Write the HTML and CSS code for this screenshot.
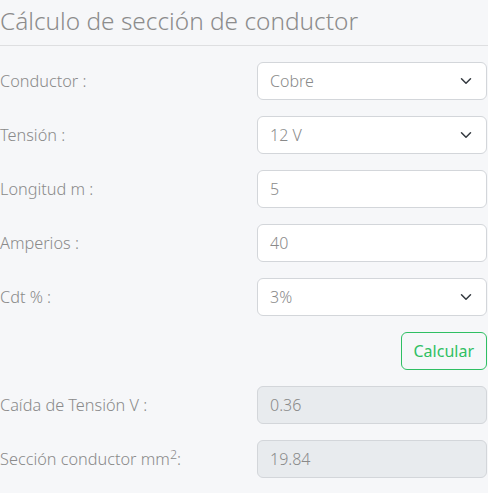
FILE: index.html
```html
<!DOCTYPE html>
<html lang="es">
<head>
<meta charset="utf-8">
<title>Cálculo de sección de conductor</title>
<link rel="stylesheet" href="styles.css">
</head>
<body>
<h1 class="title">Cálculo de sección de conductor</h1>
<form class="form">
  <label class="label">Conductor :</label>
  <div class="field select"><span>Cobre</span><svg class="chev" viewBox="0 0 16 16"><path d="M2 5l6 6 6-6" fill="none" stroke="#343a40" stroke-width="2" stroke-linecap="round" stroke-linejoin="round"/></svg></div>

  <label class="label">Tensión :</label>
  <div class="field select"><span>12 V</span><svg class="chev" viewBox="0 0 16 16"><path d="M2 5l6 6 6-6" fill="none" stroke="#343a40" stroke-width="2" stroke-linecap="round" stroke-linejoin="round"/></svg></div>

  <label class="label">Longitud m :</label>
  <div class="field"><span>5</span></div>

  <label class="label">Amperios :</label>
  <div class="field"><span>40</span></div>

  <label class="label">Cdt % :</label>
  <div class="field select"><span>3%</span><svg class="chev" viewBox="0 0 16 16"><path d="M2 5l6 6 6-6" fill="none" stroke="#343a40" stroke-width="2" stroke-linecap="round" stroke-linejoin="round"/></svg></div>

  <div class="btn-row"><button type="button" class="btn">Calcular</button></div>

  <label class="label">Caída de Tensión V :</label>
  <div class="field disabled"><span>0.36</span></div>

  <label class="label"><span>Sección conductor mm<sup class="sup">2</sup>:</span></label>
  <div class="field disabled"><span>19.84</span></div>
</form>
</body>
</html>
```
FILE: styles.css
```css
html, body {
  margin: 0;
  padding: 0;
  background: #f6f7f9;
  font-family: "Noto Sans", "Open Sans", sans-serif;
}
.title {
  margin: 0;
  padding: 3px 0 6px;
  font-size: 24.4px;
  font-weight: 300;
  line-height: 36px;
  color: #8c8c8c;
  border-bottom: 1px solid #dedfe1;
}
.form {
  display: grid;
  grid-template-columns: 257px 1fr;
  row-gap: 16px;
  margin-top: 16px;
  padding-right: 1px;
}
.label {
  display: flex;
  align-items: center;
  font-size: 16.3px;
  font-weight: 300;
  color: #8a8a8a;
  height: 38px;
}
.sup {
  font-size: 12.5px;
  line-height: 0;
  vertical-align: super;
}
.field {
  box-sizing: border-box;
  height: 38px;
  border: 1px solid #d3d6da;
  border-radius: 6px;
  background: #fff;
  display: flex;
  align-items: center;
  justify-content: space-between;
  padding: 0 14px 0 12px;
  font-size: 16px;
  font-weight: 300;
  color: #8a8a8a;
}
.field.disabled {
  background: #e8ebee;
}
.chev {
  width: 12px;
  height: 12px;
}
.btn-row {
  grid-column: 1 / 3;
  display: flex;
  justify-content: flex-end;
}
.btn {
  box-sizing: border-box;
  height: 38px;
  padding: 0 12px;
  border: 1px solid #2fbf63;
  border-radius: 6px;
  background: transparent;
  color: #2fbf63;
  font-family: "Noto Sans", "Open Sans", sans-serif;
  font-size: 16px;
  font-weight: 400;
}
```
